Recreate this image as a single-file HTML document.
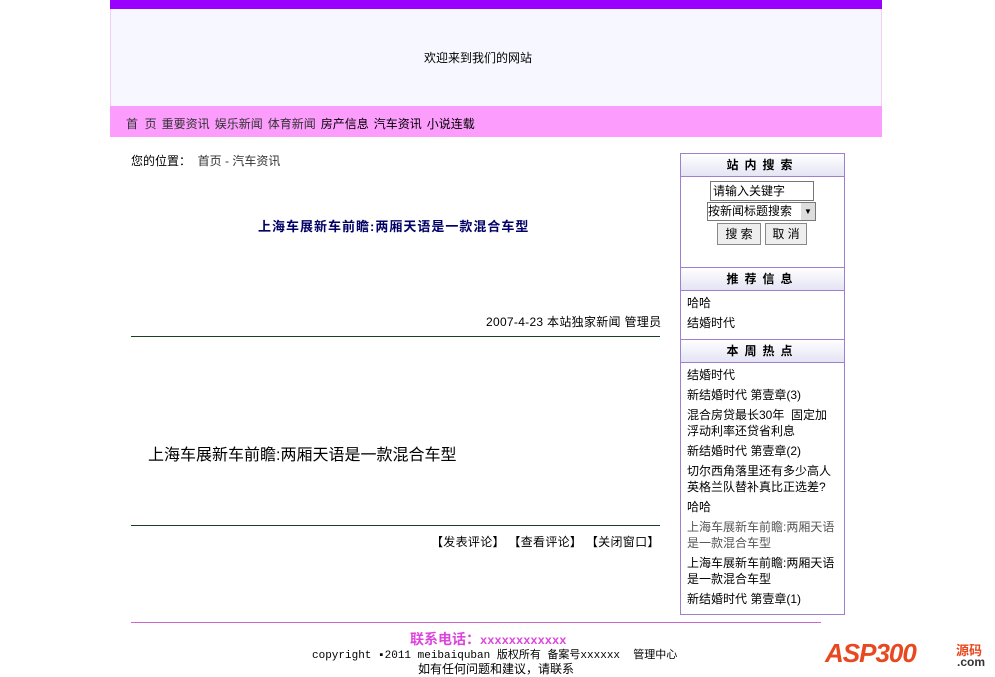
<!DOCTYPE html>
<html><head><meta charset="utf-8"><style>
body{margin:0;width:995px;height:674px;background:#fff;font-family:"Liberation Sans","Noto Sans CJK SC","WenQuanYi Zen Hei",sans-serif;font-size:12px;color:#000;position:relative;overflow:hidden}
.a{position:absolute;white-space:nowrap}
.hd{position:absolute;left:681px;width:163px;height:22px;background:linear-gradient(#fff,#e4e4f4);text-align:center;font-weight:bold;line-height:22px;letter-spacing:6px;border-top:1px solid #9f80d0;border-bottom:1px solid #9f80d0}
.it{position:absolute;left:687px;line-height:16px;white-space:normal;width:150px}
.nav span{margin-right:5px}
</style></head><body>
<div class="a" style="left:110px;top:0;width:772px;height:9px;background:#9900ff"></div>
<div class="a" style="left:110px;top:9px;width:770px;height:97px;background:#f7f7ff;border-left:1px solid #f0d0f0;border-right:1px solid #f0d0f0"></div>
<div class="a" style="left:424px;top:49px">欢迎来到我们的网站</div>
<div class="a" style="left:110px;top:106px;width:772px;height:31px;background:#fc9cfc"></div>
<div class="a nav" style="left:126px;top:115px;color:#333"><span>首&nbsp;&nbsp;页</span><span>重要资讯</span><span>娱乐新闻</span><span>体育新闻</span><span style="color:#000">房产信息</span><span style="color:#000">汽车资讯</span><span style="color:#000">小说连载</span></div>
<div class="a" style="left:131px;top:152px">您的位置： <span style="color:#333">&nbsp;首页 - 汽车资讯</span></div>
<div class="a" style="left:258px;top:216px;font-size:13px;font-weight:bold;color:#000066;letter-spacing:1px">上海车展新车前瞻:两厢天语是一款混合车型</div>
<div class="a" style="left:486px;top:313px;letter-spacing:0.3px">2007-4-23 本站独家新闻 管理员</div>
<div class="a" style="left:131px;top:336px;width:529px;height:1px;background:#1a4020"></div>
<div class="a" style="left:148px;top:441px;font-size:16px">上海车展新车前瞻:两厢天语是一款混合车型</div>
<div class="a" style="left:131px;top:525px;width:529px;height:1px;background:#1a4020"></div>
<div class="a" style="left:431px;top:533px;letter-spacing:0.3px">【发表评论】 【查看评论】 【关闭窗口】</div>
<div class="a" style="left:680px;top:153px;width:163px;height:460px;border:1px solid #9f80d0"></div>
<div class="hd" style="top:153px">站内搜索</div>
<div class="a" style="left:710px;top:181px;width:100px;height:18px;border:1px solid #777;background:#fff;line-height:18px;padding-left:2px">请输入关键字</div>
<div class="a" style="left:707px;top:202px;width:107px;height:17px;border:1px solid #777;background:#fff;line-height:17px">按新闻标题搜索<span style="position:absolute;right:0;top:0;width:14px;height:17px;background:#ddd;font-size:8px;text-align:center">▼</span></div>
<div class="a" style="left:717px;top:223px;width:42px;height:20px;background:#eee;border:1px solid #888;text-align:center;line-height:20px">搜 索</div>
<div class="a" style="left:765px;top:223px;width:40px;height:20px;background:#eee;border:1px solid #888;text-align:center;line-height:20px">取 消</div>
<div class="hd" style="top:267px">推荐信息</div>
<div class="it" style="top:295px">哈哈</div>
<div class="it" style="top:315px">结婚时代</div>
<div class="hd" style="top:339px">本周热点</div>
<div class="it" style="top:367px">结婚时代</div>
<div class="it" style="top:387px">新结婚时代 第壹章(3)</div>
<div class="it" style="top:407px">混合房贷最长30年 &nbsp;固定加浮动利率还贷省利息</div>
<div class="it" style="top:443px">新结婚时代 第壹章(2)</div>
<div class="it" style="top:463px">切尔西角落里还有多少高人 英格兰队替补真比正选差?</div>
<div class="it" style="top:499px">哈哈</div>
<div class="it" style="top:519px;color:#555">上海车展新车前瞻:两厢天语是一款混合车型</div>
<div class="it" style="top:555px">上海车展新车前瞻:两厢天语是一款混合车型</div>
<div class="it" style="top:591px">新结婚时代 第壹章(1)</div>
<div class="a" style="left:131px;top:622px;width:690px;height:1px;background:#cc66cc"></div>
<div class="a" style="left:410px;top:629px;font-size:14px;font-weight:bold;color:#dd44dd">联系电话：<span style="font-family:'Liberation Mono',monospace;font-size:12px">xxxxxxxxxxxx</span></div>
<div class="a" style="left:312px;top:646px;font-family:'Liberation Mono','Noto Sans CJK SC',monospace;font-size:11px">copyright ▪2011 meibaiquban 版权所有 备案号xxxxxx &nbsp;管理中心</div>
<div class="a" style="left:418px;top:660px">如有任何问题和建议，请联系</div>
<div class="a" style="left:825px;top:638px;font-size:26px;font-weight:bold;font-style:italic;color:#e84820;letter-spacing:-1px">ASP300</div>
<div class="a" style="left:956px;top:640px;font-size:13px;font-weight:bold;color:#e84820">源码</div>
<div class="a" style="left:957px;top:655px;font-size:12px;font-weight:bold;color:#333">.com</div>
</body></html>
